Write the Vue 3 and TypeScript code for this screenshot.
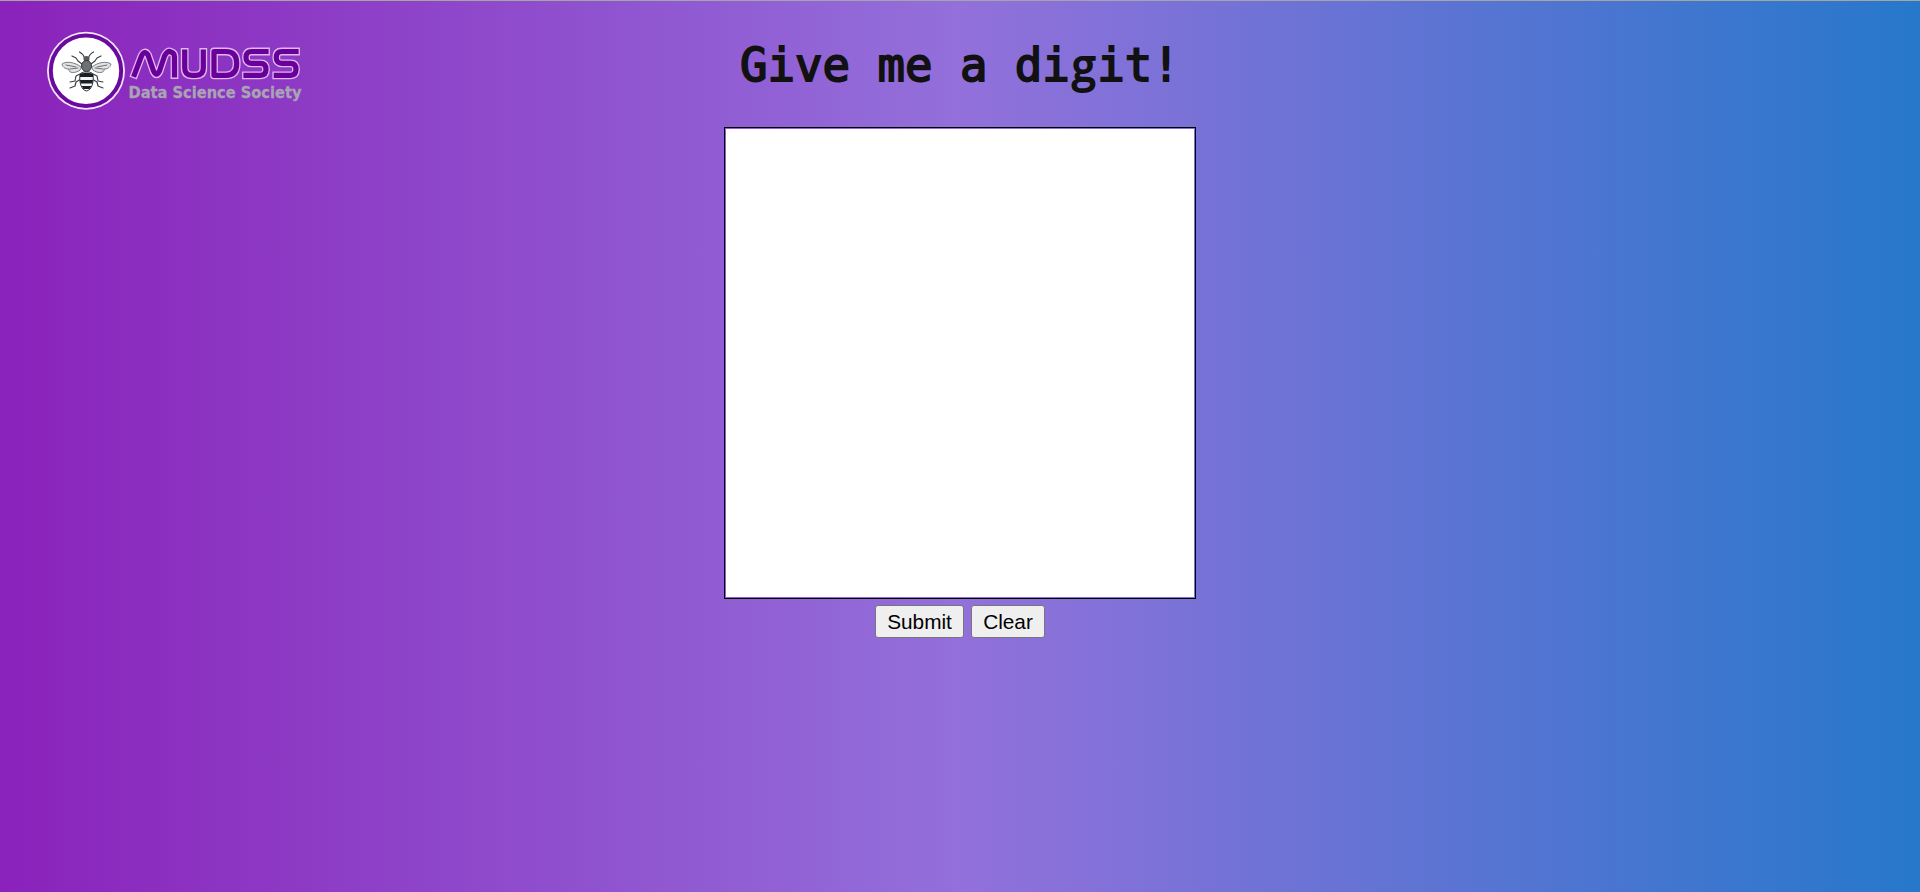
<script setup lang="ts">
import { ref } from 'vue'

const pad = ref<HTMLCanvasElement | null>(null)
const guess = ref('')
let drawing = false

function point(e: MouseEvent, start: boolean) {
  const ctx = pad.value?.getContext('2d')
  if (!ctx) return
  if (start) {
    drawing = true
    ctx.lineWidth = 20
    ctx.lineCap = 'round'
    ctx.beginPath()
    ctx.moveTo(e.offsetX, e.offsetY)
  } else if (drawing) {
    ctx.lineTo(e.offsetX, e.offsetY)
    ctx.stroke()
  }
}
function stop() {
  drawing = false
}
function submit() {
  guess.value = pad.value?.toDataURL() ?? ''
}
function clear() {
  pad.value?.getContext('2d')?.clearRect(0, 0, 468, 468)
  guess.value = ''
}
</script>

<template>
  <main class="page">
    <svg class="logo" width="262" height="84" viewBox="44 28 262 84" role="img" aria-label="MUDSS Data Science Society">
      <circle cx="86" cy="70.8" r="39" fill="#f3e6f8" />
      <circle cx="86" cy="70.8" r="35.200" fill="#fff" stroke="#6a0a9e" stroke-width="4" />
      <g fill="none" stroke="#3c4043" stroke-width="1.200" stroke-linecap="round" stroke-linejoin="round">
        <path d="M84.500 58q-1-4-5-6M88.500 58q1-4 5-6M82 64l-4-3-2-3-4-2M91 64l4-3 2-3 4-2M82 73l-6 3-1 5-5 1M91 73l6 3 1 5 5 1M81 79l-5 3-1 4-5 2M92 79l5 3 1 4 5 2" />
        <path d="M81 67c-6-5-15-6-19-3 1 4 4 5 7 5-1 4 6 5 11 1zM92 67c6-5 15-6 19-3-1 4-4 5-7 5 1 4-6 5-11 1z" fill="#e2e3e4" stroke="#777b7e" stroke-width="1" />
        <path d="M66 65l10 2M70 69l8-1M107 65l-10 2M103 69l-8-1" stroke-width=".7" />
      </g>
      <ellipse cx="86.500" cy="59" rx="3" ry="3" fill="#55595c" />
      <ellipse cx="86.500" cy="66" rx="5" ry="5.500" fill="#6d7174" stroke="#333739" />
      <path d="M80 74q6.500-5 13 0c1 8-1 16-6.500 17c-5.500-1-7.500-9-6.500-17z" fill="#f4f4f4" stroke="#34383b" stroke-width="1" />
      <path d="M80 74q6.500-3 13 0v3H80zM80 80h13l-.5 3.500h-12zM81.500 86h10l-2 3h-6z" fill="#182024" />
      <path v-for="layer in ['letters-edge', 'letters']" :key="layer" :class="layer" d="M134.500 74.500L141.500 56Q144.500 49.500 148 55L153.500 71Q156.500 77.500 159.500 71L164.500 56Q167.500 50 171 52Q174.500 53 174.500 57V75M184.700 52V68Q184.700 75.300 192 75.300H196Q203.300 75.300 203.300 68V52M214 51.500H226Q236.700 51.500 236.700 63.400T226 75.300H214ZM266 51.500H251.500Q246 51.500 246 57.400T251.500 63.300H260.500Q266 63.300 266 69.300T260.500 75.300H246M296 51.500H281.800Q276.300 51.500 276.300 57.400T281.800 63.300H290.500Q296 63.300 296 69.300T290.500 75.300H276.300" />
      <text x="128.500" y="97.500" textLength="173" lengthAdjust="spacingAndGlyphs">Data Science Society</text>
    </svg>
    <h1>Give me a di<span class="g">g</span>it!</h1>
    <canvas ref="pad" class="pad" width="468" height="468" @mousedown="point($event, true)" @mousemove="point($event, false)" @mouseup="stop" @mouseleave="stop" />
    <div class="actions">
      <button type="button" class="submit" @click="submit">Submit</button>
      <button type="button" class="clear" @click="clear">Clear</button>
    </div>
  </main>
</template>

<style>
body { margin: 0; overflow: hidden; }
</style>

<style scoped>
.page {
  position: relative;
  box-sizing: border-box;
  height: 100vh;
  border-top: 1px solid #a5a5a5;
  background: linear-gradient(to right, #8a22bb, mediumpurple, #2678cb);
  display: flex;
  flex-direction: column;
  align-items: center;
}
.logo { position: absolute; left: 44px; top: 27px; overflow: visible; }
.letters-edge, .letters { fill: none; stroke-linecap: square; stroke-linejoin: round; }
.letters-edge { stroke: #dfb8ed; stroke-width: 7.800px; }
.letters { stroke: #680099; stroke-width: 5.200px; }
.logo text { font: bold 15px "DejaVu Sans", sans-serif; fill: #a9a4b3; stroke: #a9a4b3; stroke-width: .3px; }
h1 {
  margin: 33px 0 33px;
  width: 440px;
  height: 60px;
  line-height: 60px;
  white-space: pre;
  color: #111;
  font-family: "DejaVu Sans Mono", monospace;
  font-size: 45.670px;
  font-weight: 400;
  -webkit-text-stroke: 1.800px #111;
}
.g {
  display: inline-block;
  width: 27.500px;
  height: 60px;
  text-align: center;
  font-family: "Open Sans", sans-serif;
  font-size: 44px;
}
.pad {
  box-sizing: border-box;
  width: 472px;
  height: 472px;
  padding: 1px;
  border: 1px solid #000;
  background: #fff content-box;
}
.actions { display: flex; gap: 7px; margin-top: 6px; }
button {
  box-sizing: border-box;
  height: 33px;
  padding: 0;
  border: 1px solid #767676;
  border-radius: 3px;
  background: #efefef;
  color: #000;
  font: 20.800px "Liberation Sans", Arial, sans-serif;
}
.submit { width: 89px; }
.clear { width: 74px; }
</style>
